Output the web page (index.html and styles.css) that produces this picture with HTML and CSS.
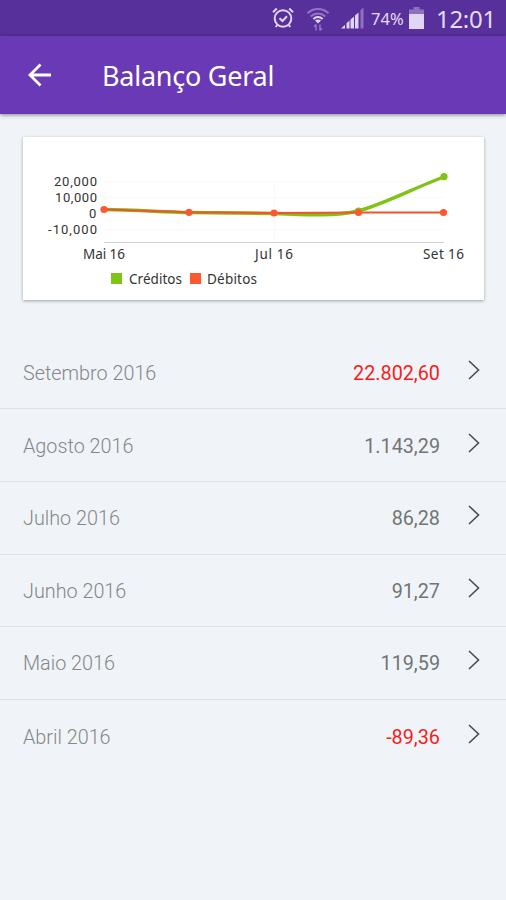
FILE: index.html
```
<!DOCTYPE html>
<html lang="pt-BR">
<head>
    <meta charset="UTF-8">
    <meta name="viewport" content="width=device-width, initial-scale=1.0">
    <title>Balanço Geral</title>
    <link rel="stylesheet" href="styles.css">
</head>
<body>

    <div class="status-bar">
        <svg class="alarm" width="24" height="24" viewBox="0 0 24 24">
            <circle cx="12" cy="12.5" r="8.3"/>
            <path d="M8.5 12.2l3 2.8 4.500-4.800M2 6.200l3.800-3.600M22 6.200l-3.800-3.600M6.300 19l-1.600 2M17.700 19l1.600 2"/>
        </svg>
        <svg class="wifi" width="24" height="26" viewBox="0 0 24 26">
            <path class="faint" d="M1.500 6.200c6-5.600 15-5.600 21 0M4.700 9.500c4.300-3.900 10.300-3.900 14.600 0"/>
            <path d="M7.300 12c2.900-2.400 6.500-2.400 9.400 0"/>
            <path class="fill" d="M9 13.600c1.800-1.400 4.200-1.400 6 0l-3 3z"/>
            <path class="faint arrows" d="M10 23.500v-6M8 19.500l2-2M14 17.500v6M16 21.500l-2 2"/>
        </svg>
        <svg class="signal" width="24" height="22" viewBox="0 0 24 22">
            <path d="M0 21.500l4-3.800v3.800zM5.500 21.500v-5.300l3-2.700v8zM9.500 21.500v-9l3.500-3v12zM14 21.500V8.500l3.500-3v16z"/>
            <path class="faint" d="M19.500 21.500V3L22.500.5v21z"/>
        </svg>
        <span class="percent">74%</span>
        <svg class="battery" width="15" height="22" viewBox="0 0 15 22">
            <path class="faint" d="M4.500 0h6v2.500H15V8H0V2.500h4.500z"/>
            <path d="M0 7h15v15H0z"/>
        </svg>
        <span class="clock">12:01</span>
    </div>

    <div class="app-bar">
        <svg class="back" width="24" height="24" viewBox="0 0 24 24">
            <path d="M24 12H3M13.500 1.500L3 12l10.500 10.500"/>
        </svg>
        <h1>Balanço Geral</h1>
    </div>

    <div class="card">
        <svg class="chart" width="461" height="163" viewBox="0 0 461 163">
            <path class="grid" d="M81 44.500h340M81 60.500h340M81 76.500h340M81 92.500h340M251.500 44v61"/>
            <path class="axis" d="M81 105.500h340"/>
            <path class="line credit" d="M81 72.500C115 73 140 75 166 75.500S225 76 251 76.500C285 78 315 79 335 74C362 67 395 49 421 40"/>
            <path class="line debit" d="M81 72.500L166 75.200L251 76L336 75.500L421 75.500"/>
            <circle class="dot-credit" cx="421" cy="39.700" r="3.600"/>
            <circle class="dot-credit" cx="335.500" cy="74" r="3.600"/>
            <g class="dot-debit">
                <circle cx="81" cy="72.500" r="3.600"/>
                <circle cx="166" cy="75.300" r="3.600"/>
                <circle cx="251" cy="76" r="3.600"/>
                <circle cx="335.500" cy="75.500" r="3.600"/>
                <circle cx="420.500" cy="75.500" r="3.600"/>
            </g>
            <g class="y-labels">
                <text x="31" y="49" textLength="43">20,000</text>
                <text x="32" y="65" textLength="42">10,000</text>
                <text x="66" y="80.500" textLength="8">0</text>
                <text x="25" y="96.500" textLength="49">-10,000</text>
            </g>
            <text x="60" y="122" textLength="42">Mai 16</text>
            <text x="232" y="122" textLength="38">Jul 16</text>
            <text x="400" y="122" textLength="41">Set 16</text>
            <rect class="dot-credit" x="88" y="136" width="11" height="11"/>
            <text x="106" y="147" textLength="53">Créditos</text>
            <rect class="dot-debit" x="167" y="136" width="11" height="11"/>
            <text x="184" y="147" textLength="50">Débitos</text>
        </svg>
    </div>

    <div class="list">
        <div class="row">
            <span class="month">Setembro 2016</span>
            <span class="value red">22.802,60</span>
            <svg class="chevron" width="12" height="20" viewBox="0 0 12 20"><path d="M1 1l9.500 9L1 19"/></svg>
        </div>
        <div class="row">
            <span class="month">Agosto 2016</span>
            <span class="value">1.143,29</span>
            <svg class="chevron" width="12" height="20" viewBox="0 0 12 20"><path d="M1 1l9.500 9L1 19"/></svg>
        </div>
        <div class="row">
            <span class="month">Julho 2016</span>
            <span class="value">86,28</span>
            <svg class="chevron" width="12" height="20" viewBox="0 0 12 20"><path d="M1 1l9.500 9L1 19"/></svg>
        </div>
        <div class="row">
            <span class="month">Junho 2016</span>
            <span class="value">91,27</span>
            <svg class="chevron" width="12" height="20" viewBox="0 0 12 20"><path d="M1 1l9.500 9L1 19"/></svg>
        </div>
        <div class="row">
            <span class="month">Maio 2016</span>
            <span class="value">119,59</span>
            <svg class="chevron" width="12" height="20" viewBox="0 0 12 20"><path d="M1 1l9.500 9L1 19"/></svg>
        </div>
        <div class="row">
            <span class="month">Abril 2016</span>
            <span class="value red">-89,36</span>
            <svg class="chevron" width="12" height="20" viewBox="0 0 12 20"><path d="M1 1l9.500 9L1 19"/></svg>
        </div>
    </div>

</body>
</html>
```
FILE: styles.css
```
* {
    box-sizing: border-box;
}
body {
    margin: 0;
    height: 900px;
    overflow: hidden;
    background-color: #f0f4f8;
    font-family: Roboto, sans-serif;
}
svg {
    display: block;
    flex: none;
}
.status-bar {
    display: flex;
    align-items: center;
    height: 36px;
    padding-left: 271px;
    background-color: #58309b;
    color: #e6dcf6;
    font-family: 'Noto Sans', sans-serif;
}
.alarm, .wifi {
    fill: none;
    stroke: #e0d5f3;
    stroke-width: 2;
}
.wifi {
    margin: 3px 0 0 11px;
}
.wifi .faint {
    stroke: #9276c2;
}
.wifi .arrows {
    stroke-width: 1.5;
}
.wifi .fill {
    fill: #e0d5f3;
    stroke: none;
}
.signal, .battery {
    fill: #e0d5f3;
}
.signal {
    margin-left: 11px;
}
.signal .faint, .battery .faint {
    fill: #8e70c0;
}
.percent {
    width: 38px;
    margin: 1px 0 0 6px;
    font-size: 16.5px;
}
.clock {
    margin: 1px 0 0 12px;
    font-size: 24px;
    letter-spacing: -0.3px;
}
.app-bar {
    display: flex;
    align-items: center;
    height: 78px;
    padding-left: 27px;
    background-color: #6a39b5;
    box-shadow: 0 1px 4px rgba(0, 0, 0, 0.45);
}
.back {
    fill: none;
    stroke: #fff;
    stroke-width: 2.8;
}
.app-bar h1 {
    margin: 1px 0 0 51px;
    color: #fff;
    font-family: 'Noto Sans', sans-serif;
    font-size: 27px;
    font-weight: 400;
    letter-spacing: -0.25px;
}
.card {
    width: 461px;
    height: 163px;
    margin: 23px 0 0 23px;
    background-color: #fff;
    box-shadow: 0 1px 3px rgba(0, 0, 0, 0.35);
}
.chart {
    fill: #333;
    font-family: 'Noto Sans', sans-serif;
    font-size: 13.5px;
}
.y-labels {
    font-family: Roboto, sans-serif;
    font-size: 13px;
}
.grid {
    stroke: #f9f9f9;
}
.axis {
    stroke: #d2d2d2;
}
.line {
    fill: none;
    stroke-width: 3.4;
}
.credit {
    stroke: #7fc315;
}
.debit {
    stroke: #f4512c;
    stroke-width: 2;
}
.dot-credit {
    fill: #7fc315;
}
.dot-debit {
    fill: #fb5a30;
}
.list {
    margin-top: 36.8px;
}
.row {
    display: flex;
    align-items: center;
    height: 72.6px;
    padding: 0 26px 0 23px;
    border-bottom: 1px solid #dde1e3;
}
.row:last-child {
    border-bottom: none;
}
.month {
    flex: 1;
    padding-top: 2px;
    color: #848789;
    font-size: 19.8px;
    font-weight: 300;
}
.value {
    padding-top: 2px;
    color: #727577;
    font-size: 19.8px;
}
.value.red {
    color: #f81c1c;
}
.chevron {
    margin: -5px 0 0 28px;
    fill: none;
    stroke: #4a4c4e;
    stroke-width: 1.6;
}
```
